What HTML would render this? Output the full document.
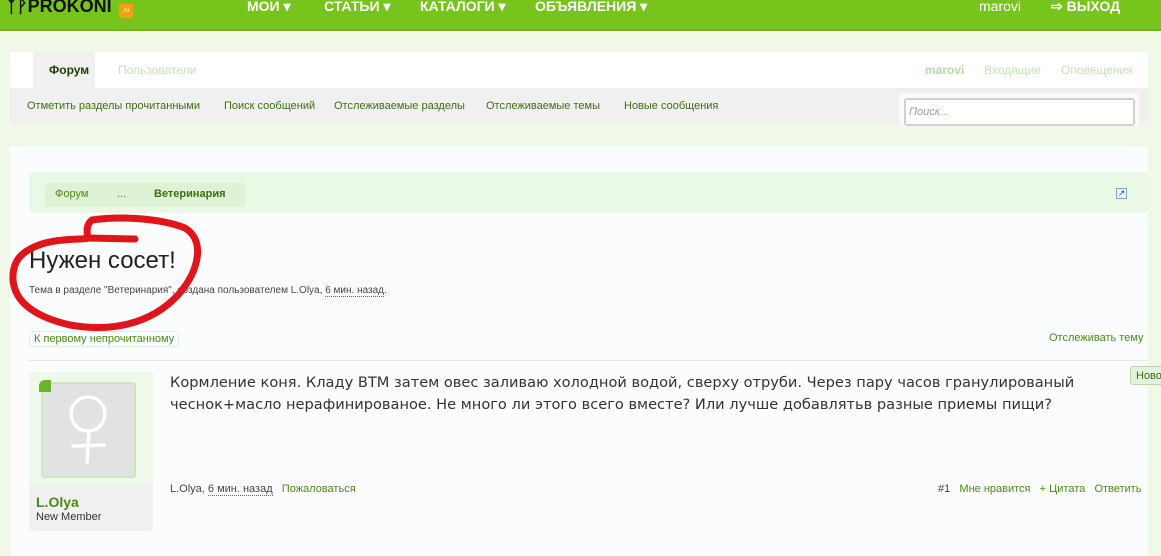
<!DOCTYPE html>
<html><head><meta charset="utf-8"><style>
*{margin:0;padding:0;box-sizing:border-box}
body{width:1161px;height:556px;overflow:hidden;background:#f0f8e8;font-family:"Liberation Sans",Arial,sans-serif;position:relative;font-size:11px;color:#333}
.abs{position:absolute;white-space:nowrap}
.hdr{position:absolute;left:0;top:0;width:1161px;height:31px;background:#76c41c;border-bottom:2px solid #6bb516}
.hdr .m{position:absolute;top:-2px;color:#fff;font-weight:bold;font-size:14px}
.tabs{position:absolute;left:10px;top:52px;width:1138px;height:36px;background:#fff}
.sub{position:absolute;left:10px;top:88px;width:1138px;height:36px;background:#f0f0f0}
.sub span{position:absolute;top:12px;color:#3e6d10;font-size:11px}
.main{position:absolute;left:10px;top:146px;width:1138px;height:410px;background:#fbfcfd}
.g{color:#4a8a14}
</style></head><body>
<div class="hdr">
<div class="abs" style="left:6px;top:-4px;font-size:18px;font-weight:bold;color:#111">ᛉᚹPROKONI</div>
<div class="abs" style="left:119px;top:4px;width:14px;height:14px;background:#f5a20a;font-size:6px;color:#fff;text-align:center;line-height:14px">.ru</div>
<div class="m" style="left:247px">МОИ ▾</div>
<div class="m" style="left:324px">СТАТЬИ ▾</div>
<div class="m" style="left:420px">КАТАЛОГИ ▾</div>
<div class="m" style="left:535px">ОБЪЯВЛЕНИЯ ▾</div>
<div class="abs" style="left:979px;top:-2px;color:#fff;font-size:14px">marovi</div>
<div class="m" style="left:1051px">⇨ ВЫХОД</div>
</div>
<div class="tabs">
<div class="abs" style="left:23px;top:0;width:62px;height:36px;background:#f0f0f0"></div>
<div class="abs" style="left:39px;top:11px;font-weight:bold;font-size:12px;color:#1c3d06">Форум</div>
<div class="abs" style="left:108px;top:11px;font-size:12px;color:#c7e0b8">Пользователи</div>
<div class="abs" style="left:915px;top:11px;font-size:12px;color:#b8d8a8;font-weight:bold">marovi</div>
<div class="abs" style="left:974px;top:11px;font-size:12px;color:#c7e0b8">Входящие</div>
<div class="abs" style="left:1051px;top:11px;font-size:12px;color:#c7e0b8">Оповещения</div>
</div>
<div class="sub">
<span style="left:17px">Отметить разделы прочитанными</span>
<span style="left:214px">Поиск сообщений</span>
<span style="left:324px">Отслеживаемые разделы</span>
<span style="left:476px">Отслеживаемые темы</span>
<span style="left:614px">Новые сообщения</span>
<div class="abs" style="left:889px;top:5px;width:240px;height:33px;background:#fafafa;border-radius:4px"></div>
<div class="abs" style="left:894px;top:10px;width:231px;height:28px;background:#fff;border:2px solid #d0d0d0;border-radius:3px;font-style:italic;color:#999;padding:6px 3px">Поиск...</div>
</div>
<div class="main">
<div class="abs" style="left:19px;top:26px;width:1119px;height:41px;background:#eaf8e6;border-radius:4px"></div>
<div class="abs" style="left:35px;top:37px;width:200px;height:24px;background:#dff2d6;border-radius:3px"></div>
<div class="abs" style="left:45px;top:42px;color:#4a8a14">Форум</div>
<div class="abs" style="left:107px;top:42px;color:#4a8a14">...</div>
<div class="abs" style="left:144px;top:42px;color:#3e6d10;font-weight:bold">Ветеринария</div>
<div class="abs" style="left:1106px;top:42px;width:11px;height:11px;border:1px solid #7aa9c9;background:#e8f2fa;font-size:9px;line-height:9px;color:#1d5e8e;text-align:center">↗</div>
<div class="abs" style="left:19px;top:101px;font-size:24px;color:#222">Нужен сосет!</div>
<div class="abs" style="left:19px;top:139px;font-size:10px;color:#444">Тема в разделе "Ветеринария", создана пользователем L.Olya, <span style="border-bottom:1px dotted #666">6 мин. назад</span>.</div>
<div class="abs" style="left:19px;top:185px;border:1px solid #e0eedb;border-radius:3px;padding:1px 4px;color:#4a8a14">К первому непрочитанному</div>
<div class="abs" style="left:1039px;top:186px;color:#4a8a14">Отслеживать тему</div>
<div class="abs" style="left:19px;top:214px;width:1119px;height:1px;background:#e6e6e6"></div>
<div class="abs" style="left:19px;top:226px;width:124px;height:159px;background:#eff9ea;border-radius:4px"></div>
<div class="abs" style="left:19px;top:340px;width:124px;height:45px;background:#f0f0f0;border-radius:0 0 4px 4px"></div>
<div class="abs" style="left:31px;top:236px;width:95px;height:96px;background:#e2e2e2;border:2px solid #cfe6c4;border-radius:3px"></div>
<div class="abs" style="left:29px;top:234px;width:12px;height:12px;background:#6ab42a;border-radius:6px 0 0 0"></div>
<svg class="abs" style="left:31px;top:236px" width="95" height="96"><g stroke="#fff" stroke-width="3.5" fill="none" stroke-linecap="round"><circle cx="47" cy="32" r="17"/><path d="M48 49 L46 80 M32 64 L63 63"/></g></svg>
<div class="abs" style="left:26px;top:348px;font-size:14px;font-weight:bold;color:#4a8a14">L.Olya</div>
<div class="abs" style="left:26px;top:365px;color:#333">New Member</div>
<div class="abs" style="left:160px;top:226px;font-family:'DejaVu Sans',sans-serif;font-size:14.6px;line-height:22px;color:#333">Кормление коня. Кладу ВТМ затем овес заливаю холодной водой, сверху отруби. Через пару часов гранулированый<br>чеснок+масло нерафинированое. Не много ли этого всего вместе? Или лучше добавлятьв разные приемы пищи?</div>
<div class="abs" style="left:1120px;top:220px;width:40px;height:19px;background:#e4f2dc;border:1px solid #b8d8a8;border-radius:3px;color:#3e6d10;padding:3px 5px">Новое</div>
<div class="abs" style="left:160px;top:337px;color:#444">L.Olya, <span style="border-bottom:1px dotted #666">6 мин. назад</span> &nbsp; <span class="g">Пожаловаться</span></div>
<div class="abs" style="left:928px;top:337px;color:#444">#1 &nbsp; <span class="g">Мне нравится</span> &nbsp; <span class="g">+ Цитата</span> &nbsp; <span class="g">Ответить</span></div>
</div>
<svg class="abs" style="left:0;top:210px" width="220" height="130"><path d="M88 28 L135 29 M88 28 C86 20 87 14 92 10 C120 6 160 8 185 18 C205 30 200 60 178 85 C150 115 110 122 70 115 C40 108 15 95 13 70 C12 50 22 40 45 33 C65 28 80 30 90 28" stroke="#e0151c" stroke-width="7" fill="none" stroke-linecap="round" stroke-linejoin="round"/></svg>
</body></html>
